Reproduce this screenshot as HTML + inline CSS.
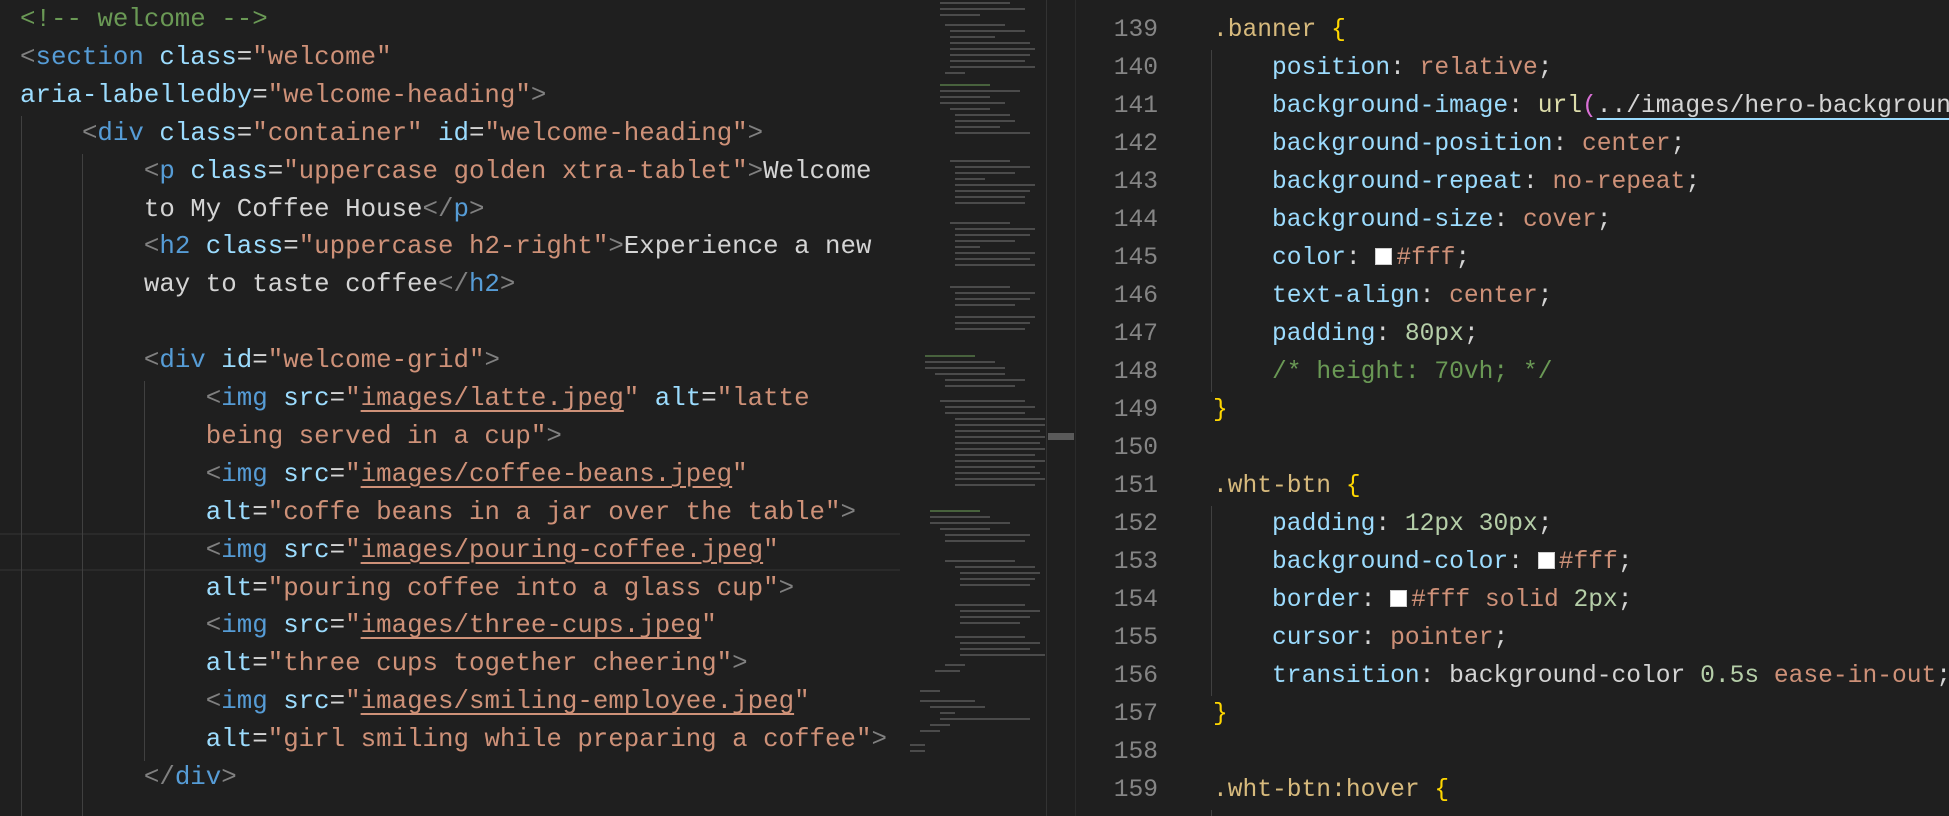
<!DOCTYPE html>
<html><head><meta charset="utf-8"><style>
html,body{margin:0;padding:0;background:#1f1f1f;width:1949px;height:816px;overflow:hidden;position:relative}
.code{position:absolute;font-family:"Liberation Mono",monospace;white-space:pre;color:#d4d4d4}
.l{position:absolute;left:0;height:38px;line-height:38px}
.t{color:#808080}.n{color:#569cd6}.a{color:#9cdcfe}.s{color:#ce9178}.c{color:#6a9955}.w{color:#d4d4d4}
.u{text-decoration:underline;text-decoration-color:#ce9178;text-underline-offset:5px;text-decoration-thickness:2px}
.sel{color:#d7ba7d}.b{color:#ffd700}.p{color:#9cdcfe}.v{color:#ce9178}.num{color:#b5cea8}.f{color:#dcdcaa}.pk{color:#da70d6}
.uu{text-decoration:underline;text-decoration-color:#9cdcfe;text-underline-offset:6px;text-decoration-thickness:2px}
.g{position:absolute;width:1px;background:#404040}
.sw{display:inline-block;width:17px;height:17px;background:#fff;border:1px solid #ccc;vertical-align:-1px;margin-right:4px;box-sizing:border-box}
.ln{position:absolute;width:110px;text-align:right;color:#858585;font-family:"Liberation Mono",monospace;font-size:24.6px;height:38px;line-height:38px;left:0}
.mm{position:absolute;height:2px;background:#6f6f6f;opacity:.55}
</style></head><body>
<div style="position:absolute;left:0;top:533px;width:900px;height:34px;border-top:2px solid #2a2a2a;border-bottom:2px solid #2a2a2a"></div>
<div class="g" style="left:21px;top:116px;height:700px"></div>
<div class="g" style="left:82px;top:154px;height:662px"></div>
<div class="g" style="left:144px;top:381px;height:380px"></div>
<div style="position:absolute;left:0;top:0;width:905px;height:816px;overflow:hidden">
<div class="code" style="left:20px;top:1px;font-size:25.8px">
<div class="l" style="top:0"><span class="c">&lt;!-- welcome --&gt;</span></div>
<div class="l" style="top:37.9px"><span class="t">&lt;</span><span class="n">section</span> <span class="a">class</span>=<span class="s">"welcome"</span></div>
<div class="l" style="top:75.8px"><span class="a">aria-labelledby</span>=<span class="s">"welcome-heading"</span><span class="t">&gt;</span></div>
<div class="l" style="top:113.7px">    <span class="t">&lt;</span><span class="n">div</span> <span class="a">class</span>=<span class="s">"container"</span> <span class="a">id</span>=<span class="s">"welcome-heading"</span><span class="t">&gt;</span></div>
<div class="l" style="top:151.6px">        <span class="t">&lt;</span><span class="n">p</span> <span class="a">class</span>=<span class="s">"uppercase golden xtra-tablet"</span><span class="t">&gt;</span>Welcome</div>
<div class="l" style="top:189.5px">        to My Coffee House<span class="t">&lt;/</span><span class="n">p</span><span class="t">&gt;</span></div>
<div class="l" style="top:227.4px">        <span class="t">&lt;</span><span class="n">h2</span> <span class="a">class</span>=<span class="s">"uppercase h2-right"</span><span class="t">&gt;</span>Experience a new</div>
<div class="l" style="top:265.3px">        way to taste coffee<span class="t">&lt;/</span><span class="n">h2</span><span class="t">&gt;</span></div>
<div class="l" style="top:341.1px">        <span class="t">&lt;</span><span class="n">div</span> <span class="a">id</span>=<span class="s">"welcome-grid"</span><span class="t">&gt;</span></div>
<div class="l" style="top:379px">            <span class="t">&lt;</span><span class="n">img</span> <span class="a">src</span>=<span class="s">"<span class="u">images/latte.jpeg</span>"</span> <span class="a">alt</span>=<span class="s">"latte</span></div>
<div class="l" style="top:416.9px">            <span class="s">being served in a cup"</span><span class="t">&gt;</span></div>
<div class="l" style="top:454.8px">            <span class="t">&lt;</span><span class="n">img</span> <span class="a">src</span>=<span class="s">"<span class="u">images/coffee-beans.jpeg</span>"</span></div>
<div class="l" style="top:492.7px">            <span class="a">alt</span>=<span class="s">"coffe beans in a jar over the table"</span><span class="t">&gt;</span></div>
<div class="l" style="top:530.6px">            <span class="t">&lt;</span><span class="n">img</span> <span class="a">src</span>=<span class="s">"<span class="u">images/pouring-coffee.jpeg</span>"</span></div>
<div class="l" style="top:568.5px">            <span class="a">alt</span>=<span class="s">"pouring coffee into a glass cup"</span><span class="t">&gt;</span></div>
<div class="l" style="top:606.4px">            <span class="t">&lt;</span><span class="n">img</span> <span class="a">src</span>=<span class="s">"<span class="u">images/three-cups.jpeg</span>"</span></div>
<div class="l" style="top:644.3px">            <span class="a">alt</span>=<span class="s">"three cups together cheering"</span><span class="t">&gt;</span></div>
<div class="l" style="top:682.2px">            <span class="t">&lt;</span><span class="n">img</span> <span class="a">src</span>=<span class="s">"<span class="u">images/smiling-employee.jpeg</span>"</span></div>
<div class="l" style="top:720.1px">            <span class="a">alt</span>=<span class="s">"girl smiling while preparing a coffee"</span><span class="t">&gt;</span></div>
<div class="l" style="top:758px">        <span class="t">&lt;/</span><span class="n">div</span><span class="t">&gt;</span></div>
</div>
</div>
<div style="position:absolute;left:905px;top:0;width:142px;height:816px;overflow:hidden">
<div class="mm" style="left:35px;top:2px;width:70px"></div><div class="mm" style="left:35px;top:8px;width:85px"></div><div class="mm" style="left:35px;top:14px;width:40px"></div>
<div class="mm" style="left:40px;top:24px;width:60px"></div><div class="mm" style="left:45px;top:30px;width:75px"></div><div class="mm" style="left:45px;top:36px;width:45px"></div><div class="mm" style="left:45px;top:42px;width:80px"></div><div class="mm" style="left:45px;top:48px;width:85px"></div><div class="mm" style="left:45px;top:54px;width:80px"></div><div class="mm" style="left:45px;top:60px;width:75px"></div><div class="mm" style="left:45px;top:66px;width:85px"></div><div class="mm" style="left:40px;top:72px;width:20px"></div>
<div class="mm" style="left:35px;top:84px;width:50px;background:#6a9955"></div><div class="mm" style="left:35px;top:90px;width:80px"></div><div class="mm" style="left:35px;top:96px;width:50px"></div><div class="mm" style="left:35px;top:102px;width:65px"></div><div class="mm" style="left:45px;top:108px;width:40px"></div><div class="mm" style="left:50px;top:114px;width:55px"></div><div class="mm" style="left:50px;top:120px;width:60px"></div><div class="mm" style="left:50px;top:126px;width:45px"></div><div class="mm" style="left:50px;top:132px;width:75px"></div>
<div class="mm" style="left:45px;top:160px;width:60px"></div><div class="mm" style="left:50px;top:166px;width:75px"></div><div class="mm" style="left:50px;top:172px;width:60px"></div><div class="mm" style="left:50px;top:178px;width:30px"></div><div class="mm" style="left:50px;top:184px;width:80px"></div><div class="mm" style="left:50px;top:190px;width:75px"></div><div class="mm" style="left:50px;top:196px;width:70px"></div><div class="mm" style="left:50px;top:202px;width:70px"></div>
<div class="mm" style="left:45px;top:222px;width:60px"></div><div class="mm" style="left:50px;top:228px;width:80px"></div><div class="mm" style="left:50px;top:234px;width:75px"></div><div class="mm" style="left:50px;top:240px;width:60px"></div><div class="mm" style="left:50px;top:246px;width:25px"></div><div class="mm" style="left:50px;top:252px;width:80px"></div><div class="mm" style="left:50px;top:258px;width:75px"></div><div class="mm" style="left:50px;top:264px;width:80px"></div>
<div class="mm" style="left:45px;top:286px;width:60px"></div><div class="mm" style="left:50px;top:292px;width:80px"></div><div class="mm" style="left:50px;top:298px;width:75px"></div><div class="mm" style="left:50px;top:304px;width:60px"></div><div class="mm" style="left:50px;top:316px;width:80px"></div><div class="mm" style="left:50px;top:322px;width:75px"></div><div class="mm" style="left:50px;top:328px;width:70px"></div>
<div class="mm" style="left:20px;top:355px;width:50px;background:#6a9955"></div><div class="mm" style="left:20px;top:361px;width:70px"></div><div class="mm" style="left:20px;top:367px;width:80px"></div><div class="mm" style="left:30px;top:373px;width:70px"></div><div class="mm" style="left:40px;top:379px;width:80px"></div><div class="mm" style="left:40px;top:385px;width:70px"></div>
<div class="mm" style="left:35px;top:400px;width:85px"></div><div class="mm" style="left:40px;top:406px;width:90px"></div><div class="mm" style="left:40px;top:412px;width:80px"></div><div class="mm" style="left:50px;top:418px;width:90px"></div><div class="mm" style="left:50px;top:424px;width:90px"></div><div class="mm" style="left:50px;top:430px;width:85px"></div><div class="mm" style="left:50px;top:436px;width:90px"></div><div class="mm" style="left:50px;top:442px;width:85px"></div><div class="mm" style="left:50px;top:448px;width:90px"></div><div class="mm" style="left:50px;top:454px;width:80px"></div><div class="mm" style="left:50px;top:460px;width:90px"></div><div class="mm" style="left:50px;top:466px;width:80px"></div><div class="mm" style="left:50px;top:472px;width:85px"></div><div class="mm" style="left:50px;top:478px;width:90px"></div><div class="mm" style="left:50px;top:484px;width:80px"></div>
<div class="mm" style="left:25px;top:510px;width:50px;background:#6a9955"></div><div class="mm" style="left:25px;top:516px;width:60px"></div><div class="mm" style="left:25px;top:522px;width:80px"></div><div class="mm" style="left:35px;top:528px;width:50px"></div><div class="mm" style="left:40px;top:534px;width:85px"></div><div class="mm" style="left:40px;top:540px;width:80px"></div>
<div class="mm" style="left:40px;top:560px;width:70px"></div><div class="mm" style="left:50px;top:566px;width:80px"></div><div class="mm" style="left:55px;top:572px;width:80px"></div><div class="mm" style="left:55px;top:578px;width:75px"></div><div class="mm" style="left:55px;top:584px;width:70px"></div>
<div class="mm" style="left:50px;top:604px;width:70px"></div><div class="mm" style="left:55px;top:610px;width:80px"></div><div class="mm" style="left:55px;top:616px;width:70px"></div><div class="mm" style="left:55px;top:622px;width:60px"></div>
<div class="mm" style="left:50px;top:636px;width:70px"></div><div class="mm" style="left:55px;top:642px;width:80px"></div><div class="mm" style="left:55px;top:648px;width:70px"></div><div class="mm" style="left:55px;top:654px;width:85px"></div><div class="mm" style="left:40px;top:664px;width:20px"></div><div class="mm" style="left:30px;top:670px;width:25px"></div>
<div class="mm" style="left:15px;top:690px;width:20px"></div><div class="mm" style="left:15px;top:700px;width:55px"></div><div class="mm" style="left:25px;top:706px;width:55px"></div><div class="mm" style="left:35px;top:712px;width:15px"></div><div class="mm" style="left:35px;top:718px;width:90px"></div><div class="mm" style="left:25px;top:724px;width:20px"></div><div class="mm" style="left:15px;top:730px;width:20px"></div><div class="mm" style="left:5px;top:744px;width:15px"></div><div class="mm" style="left:5px;top:750px;width:15px"></div>
</div>
<div style="position:absolute;left:1046px;top:0;width:1px;height:816px;background:#333"></div>
<div style="position:absolute;left:1048px;top:433px;width:26px;height:7px;background:#5a5a5a"></div>
<div style="position:absolute;left:1075px;top:0;width:1px;height:816px;background:#2b2b2b"></div>
<div style="position:absolute;left:1048px;top:0;width:901px;height:816px;overflow:hidden">
<div class="ln" style="top:12px">139</div><div class="ln" style="top:50px">140</div><div class="ln" style="top:88px">141</div><div class="ln" style="top:126px">142</div><div class="ln" style="top:164px">143</div><div class="ln" style="top:202px">144</div><div class="ln" style="top:240px">145</div><div class="ln" style="top:278px">146</div><div class="ln" style="top:316px">147</div><div class="ln" style="top:354px">148</div><div class="ln" style="top:392px">149</div><div class="ln" style="top:430px">150</div><div class="ln" style="top:468px">151</div><div class="ln" style="top:506px">152</div><div class="ln" style="top:544px">153</div><div class="ln" style="top:582px">154</div><div class="ln" style="top:620px">155</div><div class="ln" style="top:658px">156</div><div class="ln" style="top:696px">157</div><div class="ln" style="top:734px">158</div><div class="ln" style="top:772px">159</div><div class="ln" style="top:810px">160</div>
<div class="g" style="left:163px;top:50px;height:342px"></div>
<div class="g" style="left:163px;top:506px;height:190px"></div>
<div class="g" style="left:163px;top:810px;height:20px"></div>
<div class="code" style="left:165px;top:12px;font-size:24.6px">
<div class="l" style="top:0"><span class="sel">.banner</span> <span class="b">{</span></div>
<div class="l" style="top:38px">    <span class="p">position</span>: <span class="v">relative</span>;</div>
<div class="l" style="top:76px">    <span class="p">background-image</span>: <span class="f">url</span><span class="pk">(</span><span class="uu">../images/hero-background.jpeg</span><span class="pk">)</span>;</div>
<div class="l" style="top:114px">    <span class="p">background-position</span>: <span class="v">center</span>;</div>
<div class="l" style="top:152px">    <span class="p">background-repeat</span>: <span class="v">no-repeat</span>;</div>
<div class="l" style="top:190px">    <span class="p">background-size</span>: <span class="v">cover</span>;</div>
<div class="l" style="top:228px">    <span class="p">color</span>: <span class="sw"></span><span class="v">#fff</span>;</div>
<div class="l" style="top:266px">    <span class="p">text-align</span>: <span class="v">center</span>;</div>
<div class="l" style="top:304px">    <span class="p">padding</span>: <span class="num">80px</span>;</div>
<div class="l" style="top:342px">    <span class="c">/* height: 70vh; */</span></div>
<div class="l" style="top:380px"><span class="b">}</span></div>
<div class="l" style="top:456px"><span class="sel">.wht-btn</span> <span class="b">{</span></div>
<div class="l" style="top:494px">    <span class="p">padding</span>: <span class="num">12px 30px</span>;</div>
<div class="l" style="top:532px">    <span class="p">background-color</span>: <span class="sw"></span><span class="v">#fff</span>;</div>
<div class="l" style="top:570px">    <span class="p">border</span>: <span class="sw"></span><span class="v">#fff solid </span><span class="num">2px</span>;</div>
<div class="l" style="top:608px">    <span class="p">cursor</span>: <span class="v">pointer</span>;</div>
<div class="l" style="top:646px">    <span class="p">transition</span>: <span class="w">background-color</span> <span class="num">0.5s</span> <span class="v">ease-in-out</span>;</div>
<div class="l" style="top:684px"><span class="b">}</span></div>
<div class="l" style="top:760px"><span class="sel">.wht-btn:hover</span> <span class="b">{</span></div>
<div class="l" style="top:798px">    <span class="p">background-color</span>: <span class="sw"></span><span class="v">#fff</span>;</div>
</div>
</div>
</body></html>
